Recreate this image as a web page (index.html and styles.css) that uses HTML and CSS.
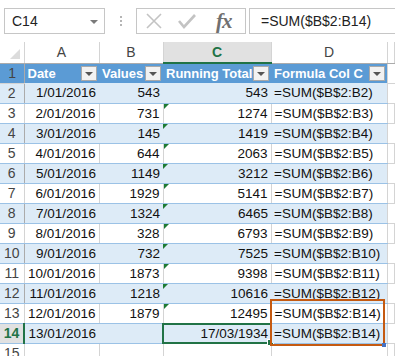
FILE: index.html
```html
<!doctype html>
<html>
<head>
<meta charset="UTF-8"/>
<link rel="stylesheet" href="styles.css">
<title>Running Total</title>
</head>
<body>
<div class="bar">
  <div class="namebox">C14<span class="caret"></span></div>
  <div class="grip"><i></i><i></i><i></i></div>
  <div class="buttons">
    <svg class="icon" width="18" height="18" viewBox="0 0 18 18"><path d="M2 2 L16 16 M16 2 L2 16" stroke="#c3c3c3" stroke-width="1.6" fill="none"/></svg>
    <svg class="icon" width="20" height="18" viewBox="0 0 20 18"><path d="M2 9 L7 15 L18 3" stroke="#c3c3c3" stroke-width="2.6" fill="none"/></svg>
    <span class="fx">fx</span>
  </div>
  <div class="formula">=SUM($B$2:B14)</div>
</div>
<table class="sheet">
  <colgroup>
    <col class="w-row"><col class="w-a"><col class="w-b"><col class="w-c"><col class="w-d"><col>
  </colgroup>
  <thead>
    <tr class="cols">
      <th class="corner"><span></span></th><th>A</th><th>B</th><th class="sel">C</th><th>D</th><th></th>
    </tr>
  </thead>
  <tbody id="rows"></tbody>
</table>
<script>
var data = [
  ["1/01/2016", 543, 543],
  ["2/01/2016", 731, 1274],
  ["3/01/2016", 145, 1419],
  ["4/01/2016", 644, 2063],
  ["5/01/2016", 1149, 3212],
  ["6/01/2016", 1929, 5141],
  ["7/01/2016", 1324, 6465],
  ["8/01/2016", 328, 6793],
  ["9/01/2016", 732, 7525],
  ["10/01/2016", 1873, 9398],
  ["11/01/2016", 1218, 10616],
  ["12/01/2016", 1879, 12495],
  ["13/01/2016", "", "17/03/1934"]
];

var html = '<tr class="head"><td class="num">1</td>' +
  '<td><div class="hd">Date<b class="flt"></b></div></td>' +
  '<td><div class="hd">Values<b class="flt"></b></div></td>' +
  '<td><div class="hd">Running Total<b class="flt"></b></div></td>' +
  '<td><div class="hd">Formula Col C<b class="flt"></b></div></td>' +
  '<td class="out"></td></tr>';

for (var i = 0; i < data.length; i++) {
  var r = i + 2;
  var last = r == 14;
  var band = r % 2 == 0 ? "band" : "plain";
  var ref = r <= 12 ? "B" + r : "B14";
  var c = '<td class="r' + (r > 2 && r < 14 ? ' warn' : '') + (last ? ' active' : '') + '">' +
    data[i][2] + (last ? '<span class="cursor"><i></i></span>' : '') + '</td>';
  var d = '<td>=SUM($B$2:' + ref + ')' +
    (r == 13 ? '<span class="trace"><i></i></span>' : '') + '</td>';
  html += '<tr class="' + band + '"><td class="num' + (last ? ' sel' : '') + '">' + r + '</td>' +
    '<td class="r">' + data[i][0] + '</td><td class="r">' + data[i][1] + '</td>' +
    c + d + '<td class="out"></td></tr>';
}
html += '<tr class="plain"><td class="num">15</td><td></td><td></td><td></td><td></td><td class="out"></td></tr>';
document.getElementById("rows").innerHTML = html;
</script>
</body>
</html>
```
FILE: styles.css
```css
body {
  margin: 0;
  background: #fff;
  font-family: "Liberation Sans", sans-serif;
  overflow: hidden;
}
.bar {
  display: flex;
  align-items: center;
  height: 26px;
  padding: 8px 0 8px 4px;
}
.namebox {
  position: relative;
  box-sizing: border-box;
  width: 101px;
  height: 26px;
  border: 1px solid #c6c6c6;
  padding: 4px 0 0 7px;
  font-size: 14px;
  color: #222;
}
.caret {
  position: absolute;
  right: 6px;
  top: 11px;
  border-left: 4px solid transparent;
  border-right: 4px solid transparent;
  border-top: 4px solid #7a7a7a;
}
.grip {
  display: flex;
  flex-direction: column;
  gap: 2px;
  width: 31px;
  align-items: center;
}
.grip i {
  width: 2px;
  height: 2px;
  background: #b5b5b5;
}
.buttons {
  box-sizing: border-box;
  width: 110px;
  height: 26px;
  border: 1px solid #c6c6c6;
  display: flex;
  align-items: center;
  padding-left: 8px;
  gap: 14px;
}
.fx {
  font-family: "Liberation Serif", serif;
  font-style: italic;
  font-weight: bold;
  font-size: 21px;
  color: #707070;
  margin-left: 5px;
  letter-spacing: -1px;
}
.formula {
  box-sizing: border-box;
  margin-left: 3px;
  flex: 1;
  height: 26px;
  border: 1px solid #c6c6c6;
  border-right: 0;
  padding: 4px 0 0 11px;
  font-size: 14px;
  color: #222;
}
.sheet {
  border-collapse: collapse;
  table-layout: fixed;
  width: 100%;
  font-size: 13.5px;
}
.w-row { width: 24px; }
.w-a { width: 75px; }
.w-b { width: 64px; }
.w-c { width: 108px; }
.w-d { width: 116px; }
.sheet td, .sheet th {
  height: 19px;
  padding: 0 3px;
  white-space: nowrap;
  overflow: visible;
  color: #111;
  line-height: 19px;
}
.cols th {
  font-weight: normal;
  font-size: 14px;
  color: #444;
  border-right: 1px solid #d4d4d4;
  border-bottom: 1px solid #ababab;
  height: 20px;
  padding: 0;
}
.cols th.sel {
  background: #e1e1e1;
  color: #217346;
  font-weight: bold;
  border-bottom: 2px solid #217346;
}
.corner {
  position: relative;
}
.corner span {
  position: absolute;
  right: 4px;
  bottom: 4px;
  border-left: 10px solid transparent;
  border-bottom: 10px solid #dcdcdc;
}
td.num {
  text-align: center;
  font-size: 14px;
  color: #444;
  border-right: 1px solid #ababab;
  border-bottom: 1px solid #d4d4d4;
  padding: 0;
}
td.num.sel {
  background: #e1e1e1;
  color: #217346;
  font-weight: bold;
  border-right: 2px solid #217346;
}
.plain td {
  border-right: 1px solid #d4d4d4;
  border-bottom: 1px solid #9bc2e6;
}
.band td {
  background: #ddebf7;
  border-bottom: 1px solid #9bc2e6;
}
.head td {
  background: #5b9bd5;
  padding: 0 2px 0 3px;
}
.plain td.out, .band td.out, .head td.out {
  background: #fff;
  border-bottom: 1px solid #d4d4d4;
  border-left: 1px solid #d4d4d4;
}
tr.plain:last-child td {
  border-bottom: 1px solid #d4d4d4;
}
.hd {
  display: flex;
  align-items: center;
  justify-content: space-between;
  color: #fff;
  font-weight: bold;
  font-size: 13px;
}
.flt {
  position: relative;
  box-sizing: border-box;
  width: 16px;
  height: 15px;
  background: #f2f2f2;
  border: 1px solid #a9a9a9;
}
.flt::after {
  content: "";
  position: absolute;
  left: 3px;
  top: 5px;
  border-left: 4px solid transparent;
  border-right: 4px solid transparent;
  border-top: 4px solid #555;
}
.r {
  text-align: right;
}
.warn, .active, .sheet td:nth-child(5) {
  position: relative;
}
.warn::before {
  content: "";
  position: absolute;
  left: 0;
  top: 0;
  border-top: 5px solid #1e7b34;
  border-right: 5px solid transparent;
}
.cursor {
  position: absolute;
  left: -1px;
  top: -1px;
  right: -1px;
  bottom: -1px;
  border: 2px solid #217346;
}
.cursor i {
  position: absolute;
  right: -4px;
  bottom: -4px;
  width: 5px;
  height: 5px;
  background: #217346;
  border: 1px solid #fff;
}
.trace {
  position: absolute;
  left: -2px;
  top: -5px;
  width: 111px;
  height: 43px;
  border: 2px solid #c55a11;
  z-index: 2;
}
.trace i {
  position: absolute;
  right: -3px;
  bottom: -3px;
  width: 4px;
  height: 4px;
  background: #4472c4;
}
```
